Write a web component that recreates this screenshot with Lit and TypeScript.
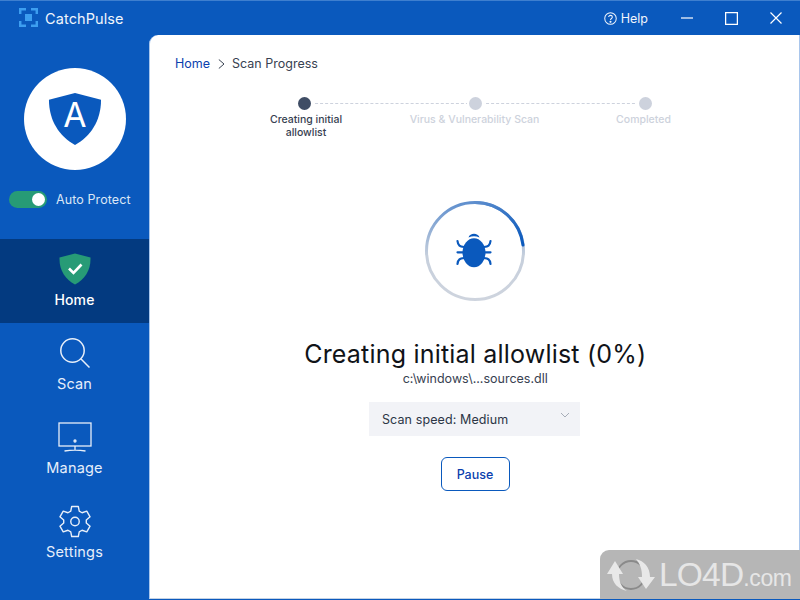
import { LitElement, html, css, svg } from "lit";
import { customElement } from "lit/decorators.js";

const navIcon = (name: string) => {
  if (name === "Home")
    return html`<svg width="32" height="32" viewBox="0 0 32 32"><path d="M16 .5 L31.500 4.500 C32 17 26 26 16 31.500 C6 26 0 17 .5 4.500 Z" fill="#279b76"/><path d="M10 15.500 L14.500 20 L22.500 11.500" fill="none" stroke="#fff" stroke-width="2.600"/></svg>`;
  if (name === "Scan")
    return html`<svg width="30" height="30" viewBox="0 0 30 30" fill="none" stroke="#e8eff9" stroke-width="1.500"><circle cx="12.500" cy="12.500" r="11.700"/><path d="M20.800 20.800 L29.500 29.500"/></svg>`;
  if (name === "Manage")
    return html`<svg width="34" height="30" viewBox="0 0 34 30" fill="none" stroke="#e8eff9" stroke-width="1.300"><rect x="1" y="1" width="32" height="23"/><circle cx="17" cy="19" r="1" /><path d="M17 24 V28.500 M6.500 29 C12 28 22 28 27.500 29"/></svg>`;
  return html`<svg width="32" height="33" viewBox="0 0 34 35" fill="none" stroke="#e8eff9" stroke-width="1.500"><path d="M13.500 1.500 H20.500 L21.500 6.500 L24.500 8.200 L29.500 6.500 L33 12.500 L29 16 V19 L33 22.500 L29.500 28.500 L24.500 26.800 L21.500 28.500 L20.500 33.500 H13.500 L12.500 28.500 L9.500 26.800 L4.500 28.500 L1 22.500 L5 19 V16 L1 12.500 L4.500 6.500 L9.500 8.200 L12.500 6.500 Z" stroke-linejoin="round"/><circle cx="17" cy="17.500" r="4.500"/></svg>`;
};

const bug = svg`<g fill="#0a59bd"><ellipse cx="49" cy="51.700" rx="11.500" ry="14.500"/><path d="M43.500 36.500 C45 31.500 53 31.500 54.500 36.500 C51 34.700 47 34.700 43.500 36.500 Z"/></g>
<g fill="none" stroke="#0a59bd" stroke-width="2.200" stroke-linecap="round"><path d="M32.500 40 C33 45 35 45.500 39 46"/><path d="M65.500 40 C65 45 63 45.500 59 46"/><path d="M32.500 51.300 H38"/><path d="M65.500 51.300 H60"/><path d="M32.500 63 C33 58 35 57.500 39 57"/><path d="M65.500 63 C65 58 63 57.500 59 57"/></g>`;

@customElement("app-root")
export class AppRoot extends LitElement {
  static styles = css`
    :host { display: block; width: 800px; height: 600px; position: relative; overflow: hidden; background: #0a59bd; font-family: Inter, "Liberation Sans", sans-serif; color: #fff; }
    .app { width: 800px; height: 600px; display: flex; flex-direction: column; box-sizing: border-box; border-top: 1px solid #3e7fcf; }
    .title { height: 34px; flex: none; display: flex; align-items: center; padding-left: 19px; }
    .logo { margin: -2px 7px 0 0; }
    .name { font-size: 14.500px; color: #f0f5fc; letter-spacing: .1px; }
    .help { margin-left: auto; display: flex; align-items: center; gap: 4px; font-size: 12.500px; color: #f0f5fc; margin-right: 33px; }
    .winbtns { display: flex; align-items: center; gap: 32px; margin-right: 18px; }
    .body { flex: 1; display: flex; min-height: 0; }
    .side { width: 149px; flex: none; display: flex; flex-direction: column; align-items: stretch; }
    .avatar { width: 102px; height: 102px; border-radius: 50%; background: #fff; margin: 33px auto 0; display: flex; align-items: center; justify-content: center; }
    .protect { display: flex; align-items: center; margin: 20px 0 0 9px; gap: 9px; font-size: 12.500px; color: #dbe6f6; height: 18px; letter-spacing: .1px; }
    .toggle { width: 38px; height: 17px; border-radius: 9px; background: #279b76; position: relative; flex: none; }
    .knob { position: absolute; right: 2px; top: 2px; width: 13px; height: 13px; background: #fff; border-radius: 50%; }
    .nav { margin-top: 31px; display: flex; flex-direction: column; }
    .item { height: 84px; box-sizing: border-box; display: flex; flex-direction: column; align-items: center; padding-top: 13px; font-size: 14.500px; color: #e6eefa; letter-spacing: .2px; }
    .item.active { background: #033a80; color: #fff; font-weight: 500; font-size: 14px; letter-spacing: .1px; }
    .ico { height: 34px; display: flex; align-items: center; justify-content: center; margin-bottom: 5px; }
    .main { flex: 1; background: #fff; border-top-left-radius: 9px; border-left: 1px solid #a9c6ec; border-right: 1px solid #a9c6ec; border-bottom: 1px solid #c4d2e4; margin-bottom: 1px; display: flex; flex-direction: column; align-items: center; color: #1f2937; position: relative; }
    .crumbs { align-self: stretch; display: flex; align-items: center; gap: 7.500px; padding: 21px 0 0 25px; font-size: 12.500px; height: 15px; color: #374151; }
    .crumbs a { color: #0b3fae; }
    .steps { display: grid; grid-template-columns: repeat(3, 170px); margin: 26px 0 0 1px; position: relative; }
    .step { display: flex; flex-direction: column; align-items: center; text-align: center; font-size: 10.500px; line-height: 13px; color: #cdd2dc; font-weight: 500; }
    .step.on { color: #374151; }
    .dot { width: 13px; height: 13px; border-radius: 50%; background: #cdd2dd; margin-bottom: 3px; position: relative; z-index: 1; box-shadow: 0 0 0 2px #fff; }
    .step.on .dot { background: #3f4d65; left: -.5px; }
    .step span { width: 90px; white-space: nowrap; display: flex; justify-content: center; position: relative; }
    .step.on span { left: 1px; }
    .step.mid span { left: -.5px; }
    .step.end span { left: -1.500px; }
    .line { position: absolute; left: 85px; right: 85px; top: 6px; border-top: 1px dashed #cdd2dd; }
    .ring { margin-top: 62px; width: 100px; height: 100px; }
    h1 { margin: 38px 0 0 1.500px; font-size: 25px; line-height: 30px; font-weight: 400; color: #101318; letter-spacing: .2px; white-space: nowrap; }
    .path { font-size: 12.500px; line-height: 16px; color: #374151; margin: 2px 0 0 1.500px; }
    .select { margin-top: 15px; width: 211px; height: 34px; background: #f2f3f7; box-sizing: border-box; padding-left: 13px; display: flex; align-items: center; font-size: 12.500px; color: #2c3646; position: relative; letter-spacing: .1px; }
    .select svg { position: absolute; right: 10px; top: 10px; }
    .pause { margin: 21px 0 0 1px; width: 69px; height: 34px; box-sizing: border-box; border: 1px solid #0a59bd; border-radius: 6px; background: #fff; color: #0b3fae; font: 500 12.500px Inter, "Liberation Sans", sans-serif; padding: 0; }
    .wm { position: absolute; right: 0; bottom: 1px; width: 200px; height: 49px; background: #b6b6b6; border-top-left-radius: 9px; display: flex; align-items: center; padding-left: 7px; box-sizing: border-box; color: #e6e6e6; font-family: "Liberation Sans", sans-serif; font-size: 33.500px; }
    .wm svg { margin-right: 4px; flex: none; }
    .wm b { font-weight: 400; display: flex; align-items: baseline; letter-spacing: -.8px; }
    .wm small { font-size: 23px; letter-spacing: -.4px; }
  `;

  render() {
    return html`<div class="app">
      <div class="title">
        <svg class="logo" width="19" height="19" viewBox="0 0 19 19" fill="none" stroke="#3d9ef0" stroke-width="2.500"><path d="M1.200 6 V1.200 H7 M12 1.200 H17.800 V6 M17.800 13 V17.800 H12 M7 17.800 H1.200 V13"/><rect x="6" y="6" width="7" height="7" fill="#3d9ef0" stroke="none"/></svg>
        <span class="name">CatchPulse</span>
        <div class="help">
          <svg width="13" height="13" viewBox="0 0 14 14" fill="none" stroke="#f0f5fc" stroke-width="1.100"><circle cx="7" cy="7" r="6.200"/><path d="M5 5.500 C5 3 9 3 9 5.500 C9 7 7 7 7 8.700"/><circle cx="7" cy="10.500" r=".6" fill="#f0f5fc"/></svg>
          Help
        </div>
        <div class="winbtns">
          <svg width="12" height="12" viewBox="0 0 12 12" stroke="#fff" stroke-width="1.200"><path d="M0 6 H12"/></svg>
          <svg width="13" height="13" viewBox="0 0 13 13" fill="none" stroke="#fff" stroke-width="1.300"><rect x=".6" y=".6" width="11.800" height="11.800"/></svg>
          <svg width="12" height="12" viewBox="0 0 12 12" stroke="#fff" stroke-width="1.200"><path d="M.5 .5 L11.500 11.500 M11.500 .5 L.5 11.500"/></svg>
        </div>
      </div>
      <div class="body">
        <div class="side">
          <div class="avatar">
            <svg width="54" height="54" viewBox="0 0 56 56"><path d="M28 1 L55 8 C55 30 44 46 28 55 C12 46 1 30 1 8 Z" fill="#0a59bd"/><text x="28" y="36.500" text-anchor="middle" font-size="35" font-family="Inter, sans-serif" fill="#fff">A</text></svg>
          </div>
          <div class="protect"><div class="toggle"><div class="knob"></div></div>Auto Protect</div>
          <div class="nav">
            ${["Home", "Scan", "Manage", "Settings"].map(
              (n) => html`<div class="item ${n === "Home" ? "active" : ""}"><div class="ico">${navIcon(n)}</div>${n}</div>`
            )}
          </div>
        </div>
        <div class="main">
          <div class="crumbs"><a>Home</a>
            <svg width="7" height="10" viewBox="0 0 7 10" fill="none" stroke="#374151" stroke-width="1"><path d="M.8 .5 L6 5 L.8 9.500"/></svg>
            <span>Scan Progress</span></div>
          <div class="steps">
            <div class="line"></div>
            <div class="step on"><div class="dot"></div><span>Creating initial</span><span>allowlist</span></div>
            <div class="step mid"><div class="dot"></div><span>Virus &amp; Vulnerability Scan</span></div>
            <div class="step end"><div class="dot"></div><span>Completed</span></div>
          </div>
          <svg class="ring" viewBox="0 0 100 100">
            <defs>
              <linearGradient id="g" x1="0" y1="0" x2="0" y2="1"><stop offset="0" stop-color="#5f8fce"/><stop offset=".55" stop-color="#c6cfdc"/><stop offset="1" stop-color="#ced4de"/></linearGradient>
              <linearGradient id="h" gradientUnits="userSpaceOnUse" x1="50" y1="0" x2="98" y2="44"><stop offset="0" stop-color="#5f8fce"/><stop offset="1" stop-color="#0a59bd"/></linearGradient>
            </defs>
            <circle cx="50" cy="50" r="48.500" fill="none" stroke="url(#g)" stroke-width="3"/>
            <path d="M50 1.500 A48.500 48.500 0 0 1 98 44" fill="none" stroke="url(#h)" stroke-width="3" stroke-linecap="round"/>
            ${bug}
          </svg>
          <h1>Creating initial allowlist (0%)</h1>
          <div class="path">c:\\windows\\...sources.dll</div>
          <div class="select">Scan speed: Medium
            <svg width="10" height="7" viewBox="0 0 10 7" fill="none" stroke="#a7adb8" stroke-width="1"><path d="M1 1 L5 5 L9 1"/></svg>
          </div>
          <button class="pause">Pause</button>
        </div>
      </div>
    </div>
    <div class="wm">
      <svg width="48" height="38" viewBox="0 0 48 38">
        <circle cx="24" cy="19" r="14" fill="none" stroke="#8a8a8a" stroke-width="1.800"/>
        <path d="M8 5 L16 18 H12 C12 25 14 31 20 35 C11 33 5 27 5 18 H0 Z" fill="#e8e8e8"/>
        <path d="M39 33 L31 21 H35 C35 13 33 8 29 3 C37 5 43 11 43 21 H48 Z" fill="#e8e8e8"/>
      </svg>
      <b>LO4D<small>.com</small></b>
    </div>`;
  }
}
